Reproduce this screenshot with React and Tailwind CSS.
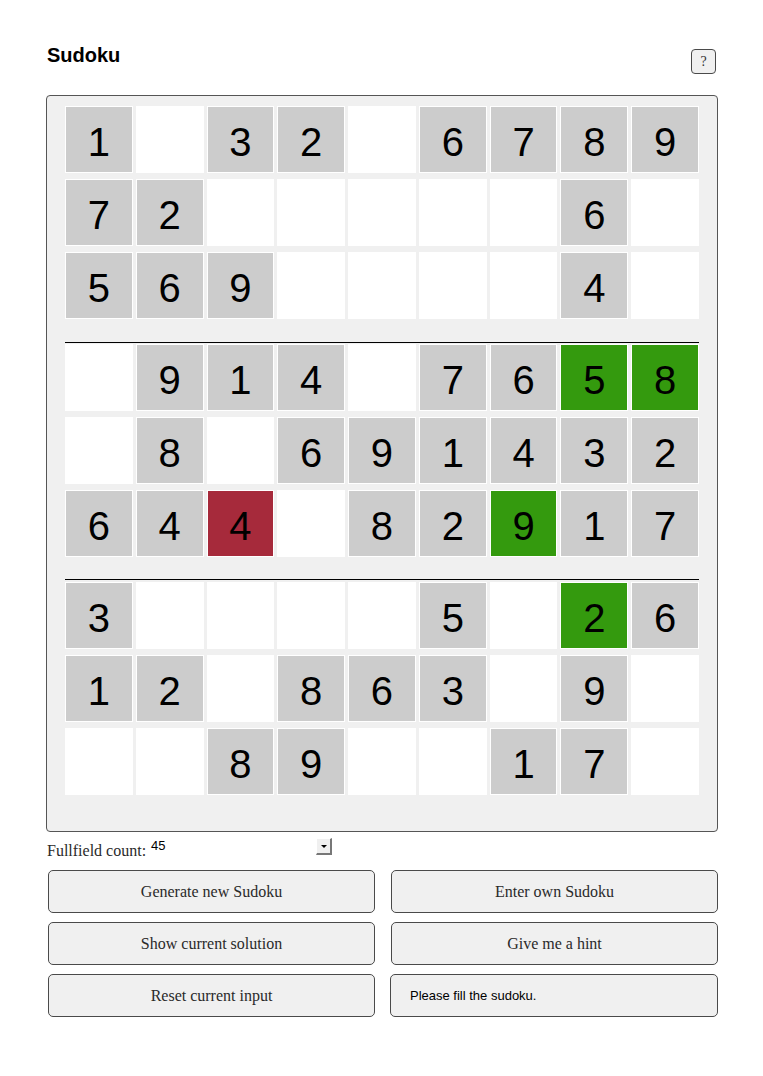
const grid = [
  ["1", "", "3", "2", "", "6", "7", "8", "9"],
  ["7", "2", "", "", "", "", "", "6", ""],
  ["5", "6", "9", "", "", "", "", "4", ""],
  ["", "9", "1", "4", "", "7", "6", "5g", "8g"],
  ["", "8", "", "6", "9", "1", "4", "3", "2"],
  ["6", "4", "4r", "", "8", "2", "9g", "1", "7"],
  ["3", "", "", "", "", "5", "", "2g", "6"],
  ["1", "2", "", "8", "6", "3", "", "9", ""],
  ["", "", "8", "9", "", "", "1", "7", ""],
];

const Cell = ({ value }) => {
  const digit = value.replace(/[gr]/, "");
  let bg = "bg-white";
  if (value.endsWith("g")) bg = "bg-[#349a0e]";
  else if (value.endsWith("r")) bg = "bg-[#a62a3b]";
  else if (digit) bg = "bg-[#cccccc]";
  return (
    <div
      className={`h-[67px] border border-white ${bg} flex items-center justify-center pt-[4px] text-[40px] leading-none text-black`}
    >
      {digit}
    </div>
  );
};

const Block = ({ rows }) => (
  <div className="flex flex-col gap-y-[6px]">
    {rows.map((row, r) => (
      <div key={r} className="grid grid-cols-9 gap-x-[3px]">
        {row.map((v, c) => (
          <Cell key={c} value={v} />
        ))}
      </div>
    ))}
  </div>
);

const Button = ({ children }) => (
  <button className="h-[43px] rounded-[5px] border-[1.5px] border-[#4a4a4a] bg-[#f0f0f0] text-[16px] text-[#2a2a2a] font-['Liberation_Serif',serif]">
    {children}
  </button>
);

export default function App() {
  return (
    <div className="min-h-screen bg-white font-['Liberation_Sans',Arial,sans-serif]">
      <div className="ml-[46px] w-[672px] pt-[43px]">
        {/* Header */}
        <div className="flex justify-between items-start">
          <h1 className="ml-[1px] text-[20px] leading-[24px] font-bold text-black">Sudoku</h1>
          <button className="mt-[6px] mr-[2px] w-[25px] h-[25px] rounded-[4px] border-[1.5px] border-[#4a4a4a] bg-[#f0f0f0] text-[14px] leading-none text-[#333] font-['Liberation_Serif',serif]">
            ?
          </button>
        </div>

        {/* Board */}
        <div className="mt-[21px] rounded-[4px] border-[1.5px] border-[#555] bg-[#f0f0f0] px-[18px] pt-[10px] pb-[36px]">
          <Block rows={grid.slice(0, 3)} />
          <div className="mt-[23px] border-t border-black pt-[1px]">
            <Block rows={grid.slice(3, 6)} />
          </div>
          <div className="mt-[22px] border-t border-black pt-[2px]">
            <Block rows={grid.slice(6, 9)} />
          </div>
        </div>

        {/* Fullfield count */}
        <div className="mt-[9px] ml-[1px] flex items-start h-[20px]">
          <span className="text-[16px] leading-[20px] text-[#2a2a2a] font-['Liberation_Serif',serif]">
            Fullfield count:
          </span>
          <div className="-mt-[3px] ml-[5px] w-[181px] flex justify-between items-start">
            <span className="text-[13px] leading-[15px] text-black">45</span>
            <span className="w-[16px] h-[17px] bg-[#f0f0f0] border-t border-l border-t-white border-l-white border-b-[2px] border-r-[2px] border-b-[#777] border-r-[#777] flex items-center justify-center">
              <span className="w-0 h-0 border-l-[3px] border-r-[3px] border-t-[3px] border-l-transparent border-r-transparent border-t-black" />
            </span>
          </div>
        </div>

        {/* Controls */}
        <div className="mt-[9px] ml-[2px] w-[670px] grid grid-cols-2 gap-x-[16px] gap-y-[9px]">
          <Button>Generate new Sudoku</Button>
          <Button>Enter own Sudoku</Button>
          <Button>Show current solution</Button>
          <Button>Give me a hint</Button>
          <Button>Reset current input</Button>
          <div className="-ml-[1px] h-[43px] rounded-[5px] border-[1.5px] border-[#4a4a4a] bg-[#f0f0f0] flex items-center pl-[19px] text-[13px] text-black">
            Please fill the sudoku.
          </div>
        </div>
      </div>
    </div>
  );
}
